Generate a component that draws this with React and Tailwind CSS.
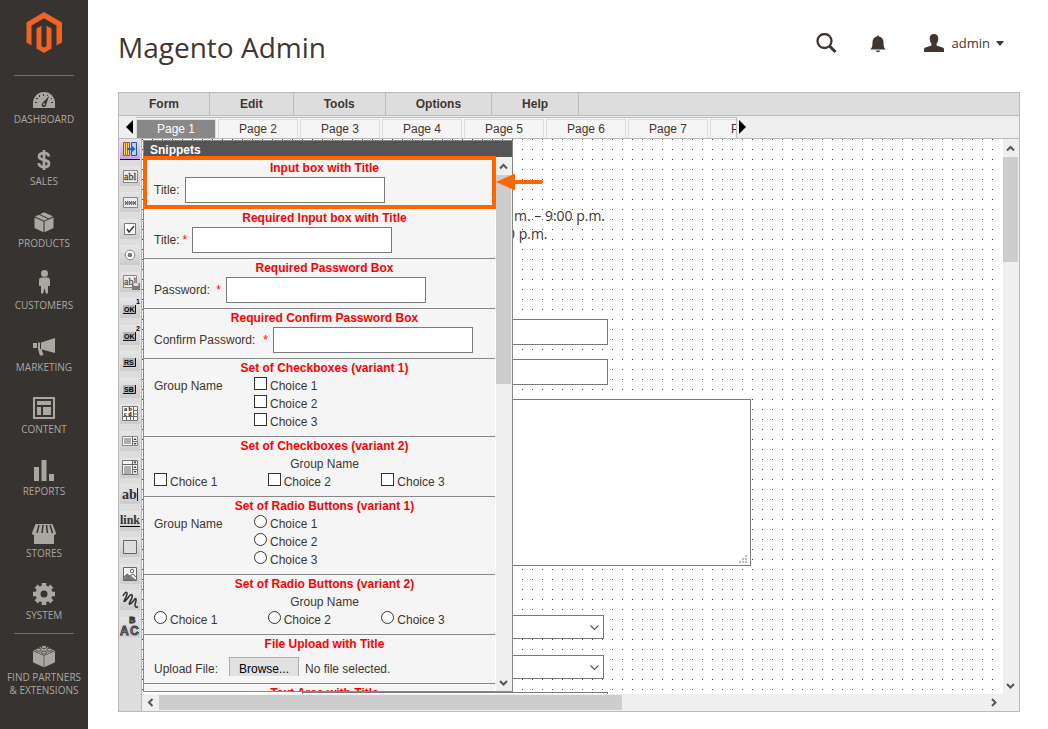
import { useState } from "react";

const navItems = [
  { name: "DASHBOARD", icon: "dashboard" },
  { name: "SALES", icon: "sales" },
  { name: "PRODUCTS", icon: "products" },
  { name: "CUSTOMERS", icon: "customers" },
  { name: "MARKETING", icon: "marketing" },
  { name: "CONTENT", icon: "content" },
  { name: "REPORTS", icon: "reports" },
  { name: "STORES", icon: "stores" },
  { name: "SYSTEM", icon: "system" },
];

const menus = ["Form", "Edit", "Tools", "Options", "Help"];

const pages = ["Page 1", "Page 2", "Page 3", "Page 4", "Page 5", "Page 6", "Page 7", "Page 8"];

const choices = ["Choice 1", "Choice 2", "Choice 3"];

const dark = "#373330";

const navIcons = {
  dashboard: (
    <>
      <path d="M1 20v-5a11 11 0 0 1 22 0v5z" />
      <g fill={dark}>
        <rect x="3" y="14" width="2" height="1" />
        <rect x="4" y="10" width="2" height="1" />
        <rect x="7" y="7" width="1" height="2" />
        <rect x="11" y="6" width="1" height="2" />
        <rect x="15" y="7" width="1" height="1" />
        <rect x="19" y="10" width="1" height="1" />
        <rect x="19" y="14" width="2" height="1" />
        <path d="M17 8l-3 9a2.200 2.200 0 1 1-3.500-2z" />
      </g>
      <circle cx="12" cy="16.300" r="1" />
    </>
  ),
  sales: (
    <path
      d="M17 6.500C16.500 4 14.500 3.200 12 3.200S7 4.200 7 6.600c0 5 10 1.800 10 6.800 0 2.500-2.500 3.600-5 3.600s-5-1-5.300-3.800M12 0v20"
      fill="none"
      stroke="currentColor"
      strokeWidth="2.800"
    />
  ),
  products: (
    <>
      <path d="M2.500 5.500 11.500 9.500v10.800L2.500 16zM21.500 5.500 12.500 9.500v10.800l9-4.300z" />
      <path d="M3 4.500 7 2.800l9 4.200-3.800 1.700zM8 2.300 12 .3l9 4-4 2.200z" />
    </>
  ),
  customers: (
    <>
      <circle cx="12.500" cy="-.5" r="3.500" />
      <path d="M9.500 3.500h6c1.500 0 2.500 1 2.500 2.500v6h-2v7.500h-2.200L12.500 14l-1.300 5.500H9V12H7V6c0-1.500 1-2.500 2.500-2.500z" />
    </>
  ),
  marketing: (
    <>
      <path d="M23 2v15L9 13.300V6.500z" />
      <path d="M6 6.500h2v7H6zM1 7h4v5H1zM6 13h3.500l2 6-3.500.8z" />
    </>
  ),
  content: (
    <>
      <path d="M1-1h22v22H1zM3 1v18h18V1z" fillRule="evenodd" />
      <path d="M5 3h14v4H5zM5 9h4v8H5zM11 9h8v8h-8z" />
    </>
  ),
  reports: <path d="M2 7h5v14H2zM9.500 0h5v21h-5zM17 14h5v7h-5z" />,
  stores: (
    <>
      <path d="M3.500 2h17L24 11c0 1.500-1 2-2 2v9H2v-9c-1 0-2-.5-2-2z" />
      <path d="M7 3 5 11M11 3l-1 8M14.500 3l1 8M18 3l2.500 8" stroke={dark} strokeWidth="1.500" />
    </>
  ),
  system: (
    <>
      <circle cx="12" cy="10" r="6" fill="none" stroke="currentColor" strokeWidth="5" />
      <path
        d="M12-1v4M12 17v4M1 10h4M19 10h4M4.200 2.200 7 5M17 15l2.800 2.800M4.200 17.800 7 15M17 5l2.800-2.800"
        stroke="currentColor"
        strokeWidth="4.500"
      />
    </>
  ),
  partners: (
    <>
      <path d="M1 5 11.700 9.800v11.500L1 16.200zM23 5 12.300 9.800v11.500L23 16.200z" />
      <path d="M1.500 4.600 12-.5l10.500 5.100L12 9.400z" />
      <g stroke={dark} strokeWidth=".8" fill="currentColor">
        <ellipse cx="12" cy="1" rx="2.800" ry="1.500" />
        <ellipse cx="6.500" cy="3.800" rx="2.800" ry="1.500" />
        <ellipse cx="17.500" cy="3.800" rx="2.800" ry="1.500" />
        <ellipse cx="12" cy="6.600" rx="2.800" ry="1.500" />
      </g>
    </>
  ),
};

function NavIcon({ name }) {
  return (
    <svg viewBox="0 0 24 24" className="h-6 w-6 shrink-0 overflow-visible" fill="currentColor" aria-hidden="true">
      {navIcons[name]}
    </svg>
  );
}

const serif = "'Liberation Serif', serif";
const sans = "'Liberation Sans', sans-serif";

function KeyCap({ text, sup }) {
  return (
    <>
      <path d="M3 7h12v8H3z" fill="#b5b5b5" />
      <path d="M3 15.500h12.500V7" fill="none" stroke="#111" />
      <text x="4" y="14" fontSize="7" fontWeight="bold" fontFamily={sans}>{text}</text>
      {sup && <text x="16" y="6" fontSize="7" fontWeight="bold" fontFamily={sans}>{sup}</text>}
    </>
  );
}

const tools = [
  {
    name: "Snippets",
    art: (
      <>
        <path d="M3.500 3.500h6v13h-6z" fill="#f7cf66" stroke="#8a5c14" />
        <path d="M5.500 3v14M7.500 3v14" stroke="#a8741f" />
        <path d="M11.500 3.500h5v13h-5z" fill="#a9d3f7" stroke="#31547d" />
        <path d="M7 9h4V6l4.500 4-4.500 4v-3H7z" fill="#2664c4" />
        <path d="M0 20.500h20" stroke="#000" />
      </>
    ),
  },
  {
    name: "Input box",
    art: (
      <>
        <path d="M3.500 4.500h14v12h-14z" fill="#eee" stroke="#888" />
        <text x="4" y="14" fontSize="10" fill="#444" fontFamily={serif} stroke="#444" strokeWidth=".3">abl</text>
      </>
    ),
  },
  {
    name: "Password box",
    art: (
      <>
        <path d="M3.500 5.500h14v10h-14z" fill="#eee" stroke="#888" />
        <path d="M5 9l3 4M8 9l-3 4M9 9l3 4M12 9l-3 4M13 9l3 4M16 9l-3 4M5 11h11" stroke="#555" />
      </>
    ),
  },
  {
    name: "Checkbox",
    art: (
      <>
        <path d="M4.500 4.500h11v11h-11z" fill="#fff" stroke="#777" />
        <path d="m7 10 2 3 5-6" fill="none" stroke="#333" strokeWidth="1.500" />
      </>
    ),
  },
  {
    name: "Radio button",
    art: (
      <>
        <circle cx="10" cy="10" r="4.800" fill="#fff" stroke="#888" />
        <circle cx="10" cy="10" r="2.300" fill="#777" />
      </>
    ),
  },
  {
    name: "File upload",
    art: (
      <>
        <path d="M3.500 3.500h13v12h-13z" fill="#eee" stroke="#888" />
        <text x="4" y="13" fontSize="10" fill="#555" fontFamily={serif} stroke="#555" strokeWidth=".3">abl</text>
        <path d="M12 11h8v7h-8z" fill="#777" />
        <path d="M13.500 11h5v3h-5z" fill="#ddd" />
      </>
    ),
  },
  { name: "Button 1", art: <KeyCap text="OK" sup="1" /> },
  { name: "Button 2", art: <KeyCap text="OK" sup="2" /> },
  { name: "Reset button", art: <KeyCap text="RS" /> },
  { name: "Submit button", art: <KeyCap text="SB" /> },
  {
    name: "Text area",
    art: (
      <>
        <path d="M2.500 2.500h15v14h-15z" fill="#f5f5f5" stroke="#777" />
        <path d="M13.500 3v13M3 12.500h14M6.500 13v3M10.500 13v3M14 6.500h3M14 10h3" stroke="#666" />
        <text x="4" y="7" fontSize="6" fontWeight="bold" fontFamily={serif}>a b</text>
        <text x="4" y="12" fontSize="6" fontWeight="bold" fontFamily={serif}>c d</text>
      </>
    ),
  },
  {
    name: "Drop-down",
    art: (
      <>
        <path d="M2.500 5.500h15v9h-15z" fill="#f5f5f5" stroke="#888" />
        <path d="M4 8h7M4 10h7M4 12h7M12.500 6v8M13 10.500h4" stroke="#666" />
        <path d="m13.500 9 1.500-2 1.500 2zM13.500 12h3L15 14z" fill="#333" />
      </>
    ),
  },
  {
    name: "List box",
    art: (
      <>
        <path d="M2.500 2.500h15v14h-15z" fill="#f5f5f5" stroke="#777" />
        <path d="M3 6.500h14M4 9h7M4 11h7M4 13h7M4 15h7M12.500 3v13M13 11.500h4" stroke="#666" />
        <path d="M13.500 3.500h3L15 6zM13.500 10 15 8l1.500 2zM13.500 13h3L15 15z" fill="#333" />
      </>
    ),
  },
  {
    name: "Text",
    art: (
      <>
        <text x="2" y="15" fontSize="14" fontWeight="bold" fill="#333" fontFamily={serif}>ab</text>
        <path d="M17.500 4v13" stroke="#222" />
      </>
    ),
  },
  {
    name: "Link",
    art: (
      <>
        <text x="0" y="13" fontSize="12" fontWeight="bold" fill="#333" fontFamily={serif}>link</text>
        <path d="M0 15.500h20" stroke="#000" />
      </>
    ),
  },
  { name: "Box", art: <path d="M3.500 3.500h13v13h-13z" fill="#ddd" stroke="#666" /> },
  {
    name: "Image",
    art: (
      <>
        <path d="M3.500 3.500h13v13h-13z" fill="#f5f5f5" stroke="#666" />
        <path d="m4 14 3-4 8 6H4z" fill="#777" />
        <path d="m4 13 3-3 9 6M10 12l3-2 3 3" fill="none" stroke="#666" />
        <circle cx="12" cy="7" r="1.800" fill="none" stroke="#666" />
      </>
    ),
  },
  {
    name: "Signature",
    art: (
      <path
        d="M3 6c2-4 4-5 4-2s-5 9-2 7 5-8 7-6-5 10-2 9 5-7 6-5-4 9 2 8"
        fill="none"
        stroke="#333"
        strokeWidth="1.600"
      />
    ),
  },
  {
    name: "Captcha",
    art: (
      <g fontFamily={sans} fontWeight="bold" fill="#888" stroke="#333" strokeWidth=".8">
        <text x="9" y="6" fontSize="9">B</text>
        <text x="0" y="18" fontSize="12">A</text>
        <text x="10" y="18" fontSize="12">C</text>
      </g>
    ),
  },
];

function Chevron({ dir = "down" }) {
  const paths = {
    up: "M1 6.500 4.500 3 8 6.500",
    down: "M1 3 4.500 6.500 8 3",
    left: "M6.500 1 3 4.500 6.500 8",
    right: "M3 1l3.500 3.500L3 8",
  };
  return (
    <svg viewBox="0 0 9 9" className="h-[9px] w-[9px] shrink-0" fill="none" stroke="#555" strokeWidth="2" aria-hidden="true">
      <path d={paths[dir]} />
    </svg>
  );
}

function VerticalScroll({ thumb }) {
  return (
    <div className="flex w-4 shrink-0 flex-col bg-[#efefef]">
      <button type="button" aria-label="Scroll up" className="flex h-[18px] items-center justify-center pr-0.5">
        <Chevron dir="up" />
      </button>
      <div className={`mr-px bg-[#cdcdcd] ${thumb}`} />
      <button type="button" aria-label="Scroll down" className="mt-auto flex h-[18px] items-center justify-center pr-0.5">
        <Chevron dir="down" />
      </button>
    </div>
  );
}

function Snippet({ title, children }) {
  return (
    <section className="border-b border-[#888] pb-[5px] pl-2.5">
      <h3 className="text-center font-bold text-[#f00]">{title}</h3>
      {children}
    </section>
  );
}

function InputSnippet({ title, label, required, id, type = "text", labelWidth = "" }) {
  return (
    <Snippet title={title}>
      <div className="flex items-center gap-[5px]">
        <label htmlFor={id} className={`flex justify-between gap-[3px] ${labelWidth}`}>
          {label}
          {required && <span className="text-[#f00]">*</span>}
        </label>
        <input id={id} type={type} className="h-[26px] w-[200px] border border-[#7a7a7a] bg-white px-1 outline-none" />
      </div>
    </Snippet>
  );
}

function Choice({ type, label, group }) {
  return (
    <label className="flex h-[18px] gap-[3px]">
      {type === "checkbox" ? (
        <input type="checkbox" className="h-[13px] w-[13px] shrink-0 appearance-none border border-[#333] bg-white checked:bg-[#333]" />
      ) : (
        <input type="radio" name={group} className="h-[13px] w-[13px] shrink-0 appearance-none rounded-full border border-[#333] bg-white checked:bg-[#333]" />
      )}
      {label}
    </label>
  );
}

function ChoiceColumn({ title, type, group }) {
  return (
    <Snippet title={title}>
      <div className="flex">
        <span className="w-[100px]">Group Name</span>
        <div>
          {choices.map((c) => (
            <Choice key={c} type={type} label={c} group={group} />
          ))}
        </div>
      </div>
    </Snippet>
  );
}

function ChoiceRow({ title, type, group }) {
  return (
    <Snippet title={title}>
      <p className="text-center">Group Name</p>
      <div className="grid grid-cols-3">
        {choices.map((c) => (
          <Choice key={c} type={type} label={c} group={group} />
        ))}
      </div>
    </Snippet>
  );
}

function SnippetsPanel() {
  return (
    <div className="absolute top-px bottom-[2px] left-px flex w-[370px] flex-col border border-[#888] bg-white leading-[18px]">
      <h2 className="h-4 shrink-0 bg-[#555] pl-1.5 leading-[18px] font-bold text-white">Snippets</h2>
      <div className="flex min-h-0 flex-1">
        <div className="mr-px flex-1 overflow-hidden bg-[#f5f5f5] pt-[2px]">
          <InputSnippet title="Input box with Title" label="Title:" id="title" />
          <InputSnippet title="Required Input box with Title" label="Title:" required id="req-title" />
          <InputSnippet title="Required Password Box" label="Password:" required id="password" type="password" labelWidth="w-[67px]" />
          <InputSnippet title="Required Confirm Password Box" label="Confirm Password:" required id="confirm" type="password" labelWidth="w-[114px]" />
          <ChoiceColumn title="Set of Checkboxes (variant 1)" type="checkbox" />
          <ChoiceRow title="Set of Checkboxes (variant 2)" type="checkbox" />
          <ChoiceColumn title="Set of Radio Buttons (variant 1)" type="radio" group="radio-1" />
          <ChoiceRow title="Set of Radio Buttons (variant 2)" type="radio" group="radio-2" />
          <Snippet title="File Upload with Title">
            <div className="flex items-start pt-1">
              <label htmlFor="upload" className="w-[75px] pt-[3px]">Upload File:</label>
              <button id="upload" type="button" className="h-[19px] w-[70px] border border-b-0 border-[#adadad] bg-[#e1e1e1] pt-1 leading-[14px] text-black">
                Browse...
              </button>
              <span className="pt-[3px] pl-1.5">No file selected.</span>
            </div>
          </Snippet>
          <Snippet title="Text Area with Title" />
        </div>
        <VerticalScroll thumb="h-[209px]" />
      </div>

      {/* Highlight on the first snippet */}
      <div className="pointer-events-none absolute top-[15px] -left-px h-[53px] w-[353px] border-4 border-[#ff6600]" />
      <svg viewBox="0 0 48 18" className="absolute top-8 left-[352px] h-[18px] w-12" aria-hidden="true">
        <path d="M0 9 19 .5v17z" fill="#ff6600" />
        <path d="M17 9h28" stroke="#ff6600" strokeWidth="4" strokeLinecap="round" />
      </svg>
    </div>
  );
}

function Canvas() {
  return (
    <div className="relative min-w-0 flex-1 overflow-hidden bg-white">
      {/* Dot grid */}
      <svg className="absolute inset-y-0 left-0 h-full w-[calc(100%-8px)]" aria-hidden="true">
        <pattern id="grid" width="10" height="10" patternUnits="userSpaceOnUse">
          <rect width="1" height="1" fill="#444" shapeRendering="crispEdges" />
        </pattern>
        <rect width="100%" height="100%" fill="url(#grid)" />
      </svg>

      <p className="absolute top-[68px] left-[372px] font-['Open_Sans',sans-serif] text-sm leading-[18px] whitespace-nowrap">
        m. – 9:00 p.m.
      </p>
      <p className="absolute top-[86px] left-[365px] font-['Open_Sans',sans-serif] text-sm leading-[18px] whitespace-nowrap">
        0 p.m.
      </p>

      <input aria-label="Field 1" className="absolute top-[180px] left-40 h-[26px] w-[306px] border border-[#7a7a7a] bg-white" />
      <input aria-label="Field 2" className="absolute top-[220px] left-40 h-[26px] w-[306px] border border-[#7a7a7a] bg-white" />
      <textarea aria-label="Field 3" className="absolute top-[260px] left-40 h-[167px] w-[449px] resize-none border border-[#7a7a7a] bg-white" />
      <svg viewBox="0 0 8 8" className="absolute top-[416px] left-[597px] h-2 w-2" fill="#bbb" aria-hidden="true">
        <path d="M6 0h2v2H6zM3 3h2v2H3zM6 3h2v2H6zM0 6h2v2H0zM3 6h2v2H3zM6 6h2v2H6z" />
      </svg>
      <select aria-label="Field 4" className="absolute top-[476px] left-40 h-6 w-[302px] appearance-none border border-[#7a7a7a] bg-white" />
      <select aria-label="Field 5" className="absolute top-[516px] left-40 h-6 w-[302px] appearance-none border border-[#7a7a7a] bg-white" />
      {["top-[486px]", "top-[526px]"].map((top) => (
        <svg key={top} viewBox="0 0 9 6" className={`pointer-events-none absolute left-[448px] h-1.5 w-[9px] ${top}`} fill="none" stroke="#555" strokeWidth="1.200" aria-hidden="true">
          <path d="M.5.5l4 4 4-4" />
        </svg>
      ))}
      <input aria-label="Field 6" className="absolute top-[553px] left-40 h-[26px] w-[306px] border border-[#7a7a7a] bg-white" />

      <SnippetsPanel />
    </div>
  );
}

function Sidebar() {
  return (
    <nav className="w-[88px] shrink-0 bg-[#373330] text-[#aaa6a0]">
      <a href="#home" aria-label="Magento Admin" className="mx-auto flex h-[76px] w-[60px] justify-center border-b border-[#736f6b] pt-3">
        <svg viewBox="0 0 36 42" className="h-[42px] w-9" fill="#f26322" aria-hidden="true">
          <path d="M18 0 36 10.500v20L30.500 33.500v-20L18 6.300 5.500 13.500v20L.5 30.500v-20z" />
          <path d="M10.500 16.500 15.500 13.700v20.500l2.500 1.400 2.500-1.400V13.700l5 2.800v20L18 41l-7.500-4.500z" />
        </svg>
      </a>
      <ul>
        {navItems.map((item) => (
          <li key={item.name}>
            <a href={`#${item.icon}`} className="flex h-[62px] flex-col items-center gap-px pt-3 text-[10px] leading-[13px]">
              <NavIcon name={item.icon} />
              {item.name}
            </a>
          </li>
        ))}
        <li className="-mt-px">
          <div className="mx-auto w-[60px] border-t border-[#736f6b]" />
          <a href="#partners" className="flex flex-col items-center gap-px pt-3 text-center text-[10px] leading-[13px]">
            <NavIcon name="partners" />
            <span>
              FIND PARTNERS
              <br />
              &amp; EXTENSIONS
            </span>
          </a>
        </li>
      </ul>
    </nav>
  );
}

function Header() {
  return (
    <header className="flex h-[92px] shrink-0 items-start justify-between">
      <h1 className="pt-[27px] text-[28px] leading-10">Magento Admin</h1>
      <div className="flex items-center pt-[33px] pr-4">
        <button type="button" aria-label="Search">
          <svg viewBox="0 0 21 20" className="h-5 w-[21px]" fill="none" stroke="currentColor" aria-hidden="true">
            <circle cx="8.500" cy="8" r="7" strokeWidth="2.300" />
            <path d="m13.500 13 6 6" strokeWidth="3" />
          </svg>
        </button>
        <button type="button" aria-label="Notifications" className="ml-[33px]">
          <svg viewBox="0 0 16 18" className="mt-0.5 h-[18px] w-4" fill="currentColor" aria-hidden="true">
            <path d="M7 1.500a1 1 0 0 1 2 0c3 .6 4.500 3 4.500 5.500 0 4 .5 6 2.200 7.500H.3C2 13 2.500 11 2.500 7c0-2.500 1.500-4.900 4.500-5.500zM6 15.500h4c0 1-.8 1.700-2 1.700s-2-.7-2-1.700z" />
          </svg>
        </button>
        <button type="button" className="ml-[38px] flex items-center text-[13px] leading-5">
          <svg viewBox="0 0 20 18" className="h-[18px] w-5" fill="currentColor" aria-hidden="true">
            <path d="M10 0c3 0 4.300 2 4.300 4.800 0 2-.8 3.800-1.800 5v1.700l6 2c1 .4 1.500 1 1.500 2V18H0v-2.500c0-1 .5-1.600 1.500-2l6-2V9.800c-1-1.200-1.800-3-1.800-5C5.700 2 7 0 10 0z" />
          </svg>
          <span className="pl-2">admin</span>
          <svg viewBox="0 0 8 5" className="ml-1.5 h-[5px] w-2" fill="currentColor" aria-hidden="true">
            <path d="M0 0h8L4 5z" />
          </svg>
        </button>
      </div>
    </header>
  );
}

function App() {
  const [page, setPage] = useState("Page 1");

  return (
    <div className="flex min-h-screen bg-white font-['Open_Sans',sans-serif] text-[#41362f]">
      <Sidebar />
      <main className="flex min-w-0 flex-1 flex-col pr-7 pb-[17px] pl-[30px]">
        <Header />

        <div className="flex flex-1 flex-col border border-[#bbb] font-['Liberation_Sans',sans-serif] text-xs">
          {/* Menu bar */}
          <div className="flex h-[23px] border-b border-[#bbb] bg-[#ddd]">
            {menus.map((m) => (
              <button key={m} type="button" className="border-r border-[#bbb] px-[30px] font-bold">
                {m}
              </button>
            ))}
          </div>

          {/* Page tabs */}
          <div className="flex h-[23px] border-b border-[#bbb] bg-[#eee]">
            <button type="button" aria-label="Previous pages" className="flex w-[17px] items-center justify-end pr-[3px]">
              <svg viewBox="0 0 7 14" className="h-3.5 w-[7px]" aria-hidden="true">
                <path d="M7 0v14L0 7z" />
              </svg>
            </button>
            <div className="mt-px flex w-[601px] gap-0.5 overflow-hidden border-t border-r border-[#bbb] bg-[#f5f5f5] pt-px">
              {pages.map((p) => (
                <button
                  key={p}
                  type="button"
                  onClick={() => setPage(p)}
                  className={`w-20 shrink-0 border-x border-t border-[#ddd] ${
                    p === page ? "bg-[#888] text-white" : "bg-[#f5f5f5]"
                  }`}
                >
                  {p}
                </button>
              ))}
            </div>
            <button type="button" aria-label="Next pages" className="flex items-center pl-0.5">
              <svg viewBox="0 0 7 14" className="h-3.5 w-[7px]" aria-hidden="true">
                <path d="M0 0v14l7-7z" />
              </svg>
            </button>
          </div>

          <div className="flex flex-1">
            {/* Toolbar */}
            <div className="w-[23px] shrink-0 border-r border-[#bbb] bg-[#ddd] px-px">
              <div className="flex h-[498px] flex-col justify-between">
                {tools.map((t, i) => (
                  <button
                    key={t.name}
                    type="button"
                    aria-label={t.name}
                    className={`h-5 w-5 bg-linear-to-b ${i === 0 ? "from-[#efe0ff] to-[#c79df0]" : "from-[#e6e6e6] to-[#cccccc]"}`}
                  >
                    <svg viewBox="0 0 20 20" className="h-5 w-5 overflow-visible" aria-hidden="true">
                      {t.art}
                    </svg>
                  </button>
                ))}
              </div>
            </div>

            <div className="flex min-w-0 flex-1 flex-col">
              <div className="flex flex-1">
                <Canvas />
                <VerticalScroll thumb="h-[105px]" />
              </div>
              <div className="flex h-[17px] items-center bg-[#efefef] pr-4">
                <button type="button" aria-label="Scroll left" className="flex h-full w-[17px] items-center justify-center">
                  <Chevron dir="left" />
                </button>
                <div className="h-[15px] w-[463px] bg-[#cdcdcd]" />
                <button type="button" aria-label="Scroll right" className="ml-auto flex h-full w-5 items-center justify-center">
                  <Chevron dir="right" />
                </button>
              </div>
            </div>
          </div>
        </div>
      </main>
    </div>
  );
}

export default App;
